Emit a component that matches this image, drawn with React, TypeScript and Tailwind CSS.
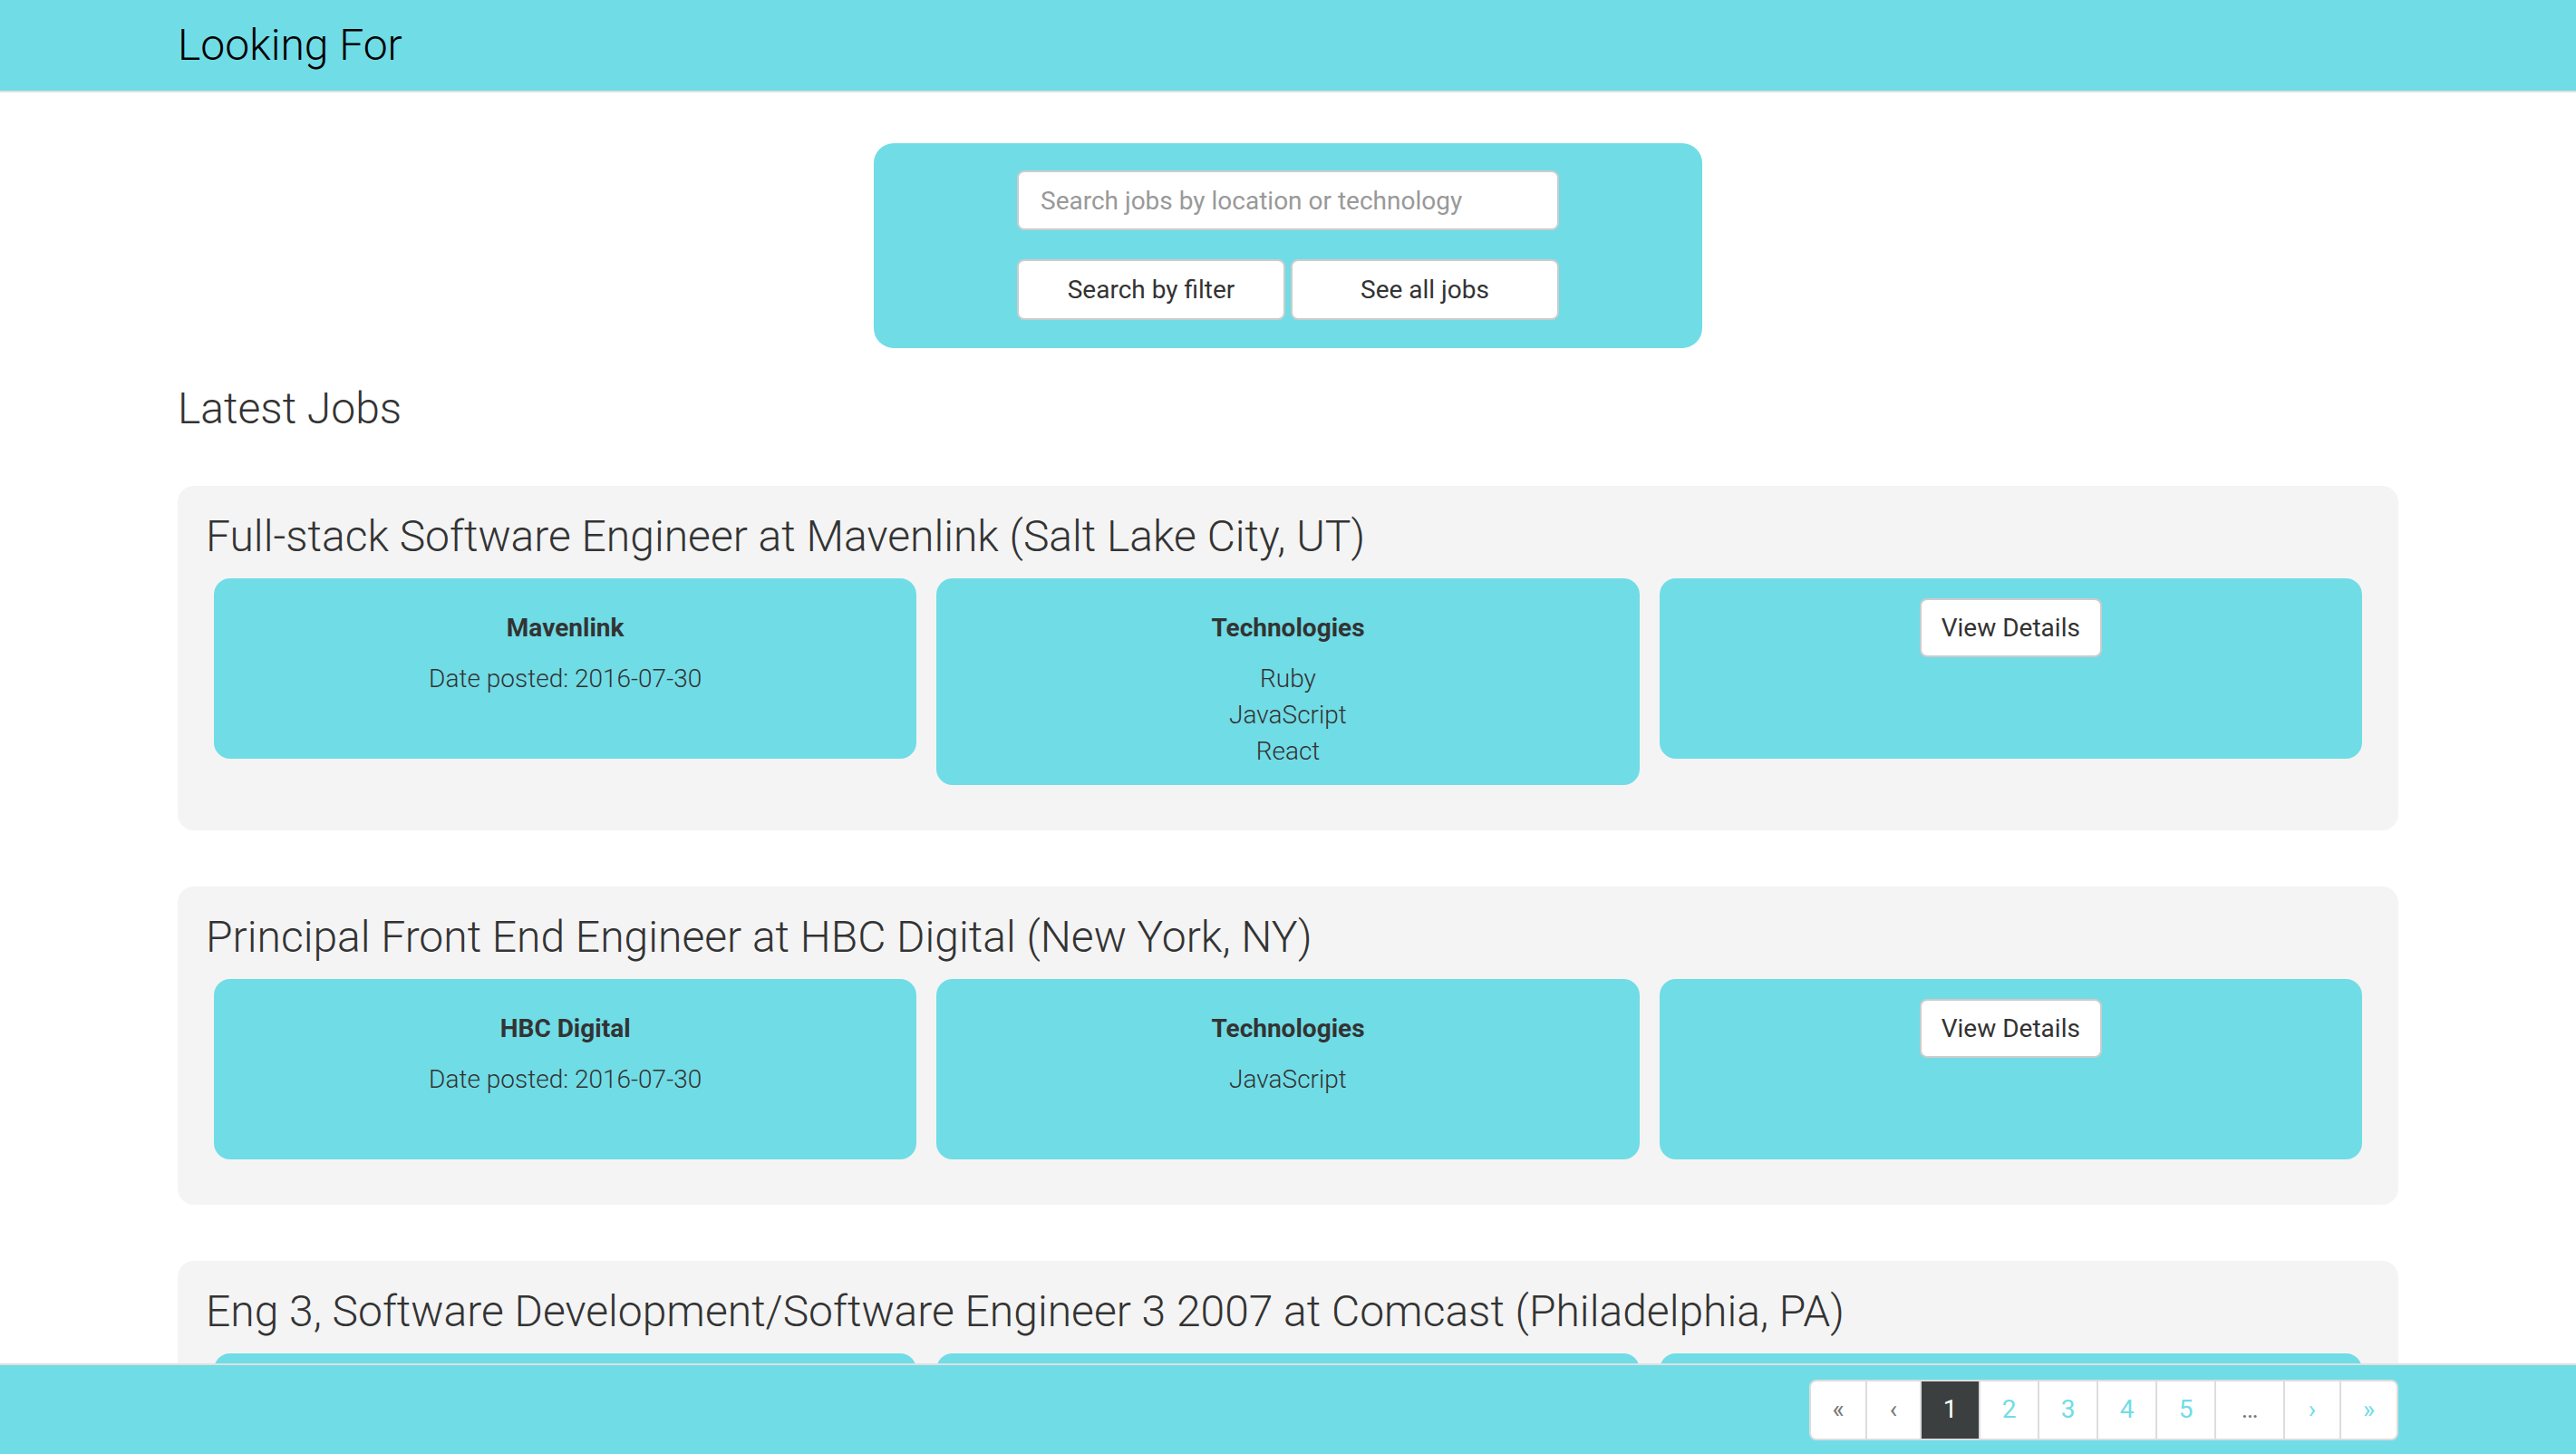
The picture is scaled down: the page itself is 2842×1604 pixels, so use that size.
import React from 'react';

interface Job {
  title: string;
  company: string;
  location: string;
  posted: string;
  technologies: string[];
}

const jobs: Job[] = [
  {
    title: 'Full-stack Software Engineer',
    company: 'Mavenlink',
    location: 'Salt Lake City, UT',
    posted: '2016-07-30',
    technologies: ['Ruby', 'JavaScript', 'React'],
  },
  {
    title: 'Principal Front End Engineer',
    company: 'HBC Digital',
    location: 'New York, NY',
    posted: '2016-07-30',
    technologies: ['JavaScript'],
  },
  {
    title: 'Eng 3, Software Development/Software Engineer 3 2007',
    company: 'Comcast',
    location: 'Philadelphia, PA',
    posted: '2016-07-30',
    technologies: ['Java', 'JavaScript'],
  },
];

// widths measured off the reference pagination
const pages = [
  { label: '«', kind: 'disabled', width: 'w-[60px]' },
  { label: '‹', kind: 'disabled', width: 'w-[60px]' },
  { label: '1', kind: 'active', width: 'w-[65px]' },
  { label: '2', kind: 'link', width: 'w-[65px]' },
  { label: '3', kind: 'link', width: 'w-[65px]' },
  { label: '4', kind: 'link', width: 'w-[65px]' },
  { label: '5', kind: 'link', width: 'w-[65px]' },
  { label: '…', kind: 'disabled', width: 'w-[76px]' },
  { label: '›', kind: 'link', width: 'w-[62px]' },
  { label: '»', kind: 'link', width: 'w-[63px]' },
];

function JobCard({ job }: { job: Job }) {
  return (
    <div className="bg-[#f4f4f4] rounded-[18px] pt-[29px] pb-[50px]">
      <h3 className="px-[31px] text-[48px] leading-[53px] font-light text-[#333]">
        {job.title} at {job.company} ({job.location})
      </h3>
      <div className="grid grid-cols-3 gap-[22px] px-[40px] mt-[20px] items-start">
        <div className="bg-[#70dce6] rounded-[18px] min-h-[199px] pt-[35px] pb-[17px] text-center text-[#333]">
          <h4 className="text-[28px] leading-[40px] font-bold">{job.company}</h4>
          <p className="mt-[16px] text-[28px] leading-[40px] font-light">Date posted: {job.posted}</p>
        </div>
        <div className="bg-[#70dce6] rounded-[18px] min-h-[199px] pt-[35px] pb-[17px] text-center text-[#333]">
          <h4 className="text-[28px] leading-[40px] font-bold">Technologies</h4>
          <ul className="mt-[16px]">
            {job.technologies.map(t => (
              <li key={t} className="text-[28px] leading-[40px] font-light">{t}</li>
            ))}
          </ul>
        </div>
        <div className="bg-[#70dce6] rounded-[18px] min-h-[199px] pt-[22px] flex justify-center items-start">
          <button className="w-[201px] h-[65px] bg-white border-2 border-[#ccc] rounded-[8px] text-[28px] text-[#333]">
            View Details
          </button>
        </div>
      </div>
    </div>
  );
}

export default function App() {
  return (
    <div className="h-[1604px] flex flex-col overflow-hidden bg-white" style={{ fontFamily: 'Roboto, "Liberation Sans", sans-serif' }}>
      <header className="h-[102px] shrink-0 bg-[#70dce6] border-b-2 border-[#e0e0e0]">
        <div className="w-[2450px] mx-auto h-full flex items-center">
          <span className="text-[48px] font-light text-black leading-none">Looking For</span>
        </div>
      </header>

      <main className="flex-1 overflow-hidden">
        <div className="w-[2450px] mx-auto">
          {/* Search panel */}
          <div className="w-[914px] mx-auto mt-[56px] bg-[#70dce6] rounded-[22px] pt-[30px] pb-[31px] flex flex-col items-center">
            <input
              type="text"
              placeholder="Search jobs by location or technology"
              className="w-[598px] h-[66px] bg-white border-2 border-[#ccc] rounded-[8px] px-[24px] text-[28px] text-[#555] placeholder:text-[#999] outline-none"
            />
            <div className="flex gap-[6px] mt-[32px]">
              <button className="w-[296px] h-[67px] bg-white border-2 border-[#ccc] rounded-[8px] text-[28px] text-[#333]">
                Search by filter
              </button>
              <button className="w-[296px] h-[67px] bg-white border-2 border-[#ccc] rounded-[8px] text-[28px] text-[#333]">
                See all jobs
              </button>
            </div>
          </div>

          <h2 className="mt-[40px] text-[48px] leading-[53px] font-light text-[#333]">Latest Jobs</h2>

          <div className="mt-[59px] flex flex-col gap-[62px]">
            {jobs.map(job => (
              <JobCard key={job.title} job={job} />
            ))}
          </div>
        </div>
      </main>

      <footer className="h-[100px] shrink-0 bg-[#70dce6] border-t-2 border-[#e0e0e0]">
        <div className="w-[2450px] mx-auto h-full flex items-center justify-end">
          <ul className="flex h-[67px] bg-white border-2 border-[#ddd] rounded-[8px] overflow-hidden">
            {pages.map((p, i) => (
              <li
                key={i}
                className={
                  'flex items-center justify-center text-[28px] ' +
                  p.width +
                  (i > 0 ? ' border-l-2 border-[#ddd]' : '') +
                  (p.kind === 'active'
                    ? ' bg-[#3b3f40] text-white border-[#3b3f40]'
                    : p.kind === 'link'
                    ? ' text-[#70dce6]'
                    : ' text-[#777]')
                }
              >
                {p.label}
              </li>
            ))}
          </ul>
        </div>
      </footer>
    </div>
  );
}
